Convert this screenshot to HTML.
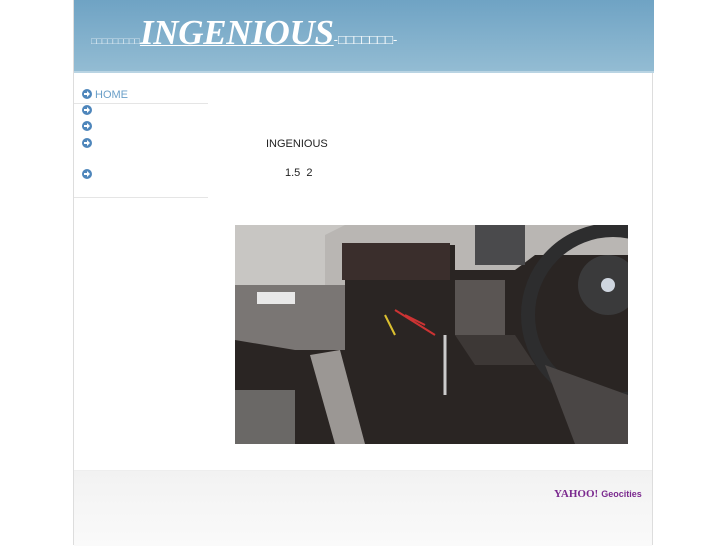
<!DOCTYPE html>
<html><head><meta charset="utf-8"><style>
html,body{margin:0;padding:0;background:#fff;width:727px;height:545px;overflow:hidden;font-family:"Liberation Sans","Noto Sans CJK JP",sans-serif}
#wrap{position:absolute;left:73px;top:0;width:580px;height:545px;border-left:1px solid #ddd;border-right:1px solid #ddd;box-sizing:border-box}
#hdr{position:absolute;left:0;top:0;width:580px;height:73px;background:linear-gradient(#6fa3c4,#93bcd3);border-bottom:2px solid #b9d4e3;box-sizing:border-box}
#hdr .t{position:absolute;left:17px;top:13px;color:#fff;white-space:nowrap}
#hdr .big{font-family:"Liberation Serif",serif;font-style:italic;font-weight:bold;font-size:35px;text-decoration:underline;text-decoration-thickness:1px;letter-spacing:-0.3px}
#hdr .sm{font-size:9px;color:#e4eef5}
#hdr .sm2{font-size:13px;color:#fff}
.nav{position:absolute;left:8px;font-size:11px;color:#6a9fc8}
.ic{display:inline-block;width:10px;height:10px;border-radius:50%;background:#4e86bb;vertical-align:-1px;margin-right:3px;position:relative}
.ic:after{content:"";position:absolute;left:2px;top:4px;width:5px;height:2px;background:#fff}
.ic:before{content:"";position:absolute;left:5px;top:2px;border-left:3px solid #fff;border-top:3px solid transparent;border-bottom:3px solid transparent}
.line{position:absolute;left:0;width:134px;border-top:1px solid #e5e5e5}
.txt{position:absolute;font-size:11px;color:#222}
#foot{position:absolute;left:0;top:470px;width:578px;height:75px;background:linear-gradient(#f2f2f2,#fafafa);border-top:1px solid #eee}
</style></head><body>
<div id="wrap">
<div id="hdr"><div class="t"><span class="sm">□□□□□□□□□</span><span class="big">INGENIOUS</span><span class="sm2">-□□□□□□□-</span></div></div>
<div class="nav" style="top:89px"><span class="ic"></span>HOME</div>
<div class="line" style="top:103px"></div>
<div class="nav" style="top:105px"><span class="ic"></span></div>
<div class="nav" style="top:121px"><span class="ic"></span></div>
<div class="nav" style="top:138px"><span class="ic"></span></div>
<div class="nav" style="top:169px"><span class="ic"></span></div>
<div class="line" style="top:197px"></div>
<div class="txt" style="left:192px;top:138px">INGENIOUS</div>
<div class="txt" style="left:211px;top:167px">1.5&nbsp; 2</div>
<svg style="position:absolute;left:161px;top:225px" width="393" height="219" viewBox="0 0 393 219">
<rect width="393" height="219" fill="#2a2523"/>
<path d="M0 0H393V30H300L280 45H220V20H110V60H0Z" fill="#b9b6b3"/>
<path d="M0 0H110L90 10V60H0Z" fill="#c8c6c3"/>
<path d="M0 60H110V125H60L0 115Z" fill="#7a7674"/>
<path d="M107 18H215V55H107Z" fill="#3a2e2c"/>
<path d="M220 55H270V110H220Z" fill="#5a5553"/>
<path d="M240 0H290V40H240Z" fill="#4a4a4c"/>
<circle cx="378" cy="90" r="85" fill="none" stroke="#2d2d2e" stroke-width="14"/>
<circle cx="373" cy="60" r="30" fill="#3a3a3b"/>
<circle cx="373" cy="60" r="7" fill="#cfd6df"/>
<path d="M75 130L100 219H130L105 125Z" fill="#9b9794"/>
<path d="M0 165H60V219H0Z" fill="#6a6866"/>
<path d="M220 110H280L300 140H240Z" fill="#3d3836"/>
<path d="M310 140L340 219H393V170Z" fill="#4a4645"/>
<rect x="22" y="67" width="38" height="12" fill="#e8e8e8"/>
<path d="M160 85L200 110M170 90L190 100" stroke="#c33" stroke-width="2"/>
<path d="M150 90L160 110" stroke="#dcc030" stroke-width="2"/>
<path d="M210 110V170" stroke="#ccc" stroke-width="3"/>
</svg>
<div id="foot"><div style="position:absolute;left:480px;top:17px;color:#7b2a8f;font-weight:bold;font-size:11px;font-family:'Liberation Serif',serif">YAHOO!<span style="font-family:'Liberation Sans',sans-serif;font-size:9px;margin-left:3px">Geocities</span></div></div>
</div>
</body></html>
